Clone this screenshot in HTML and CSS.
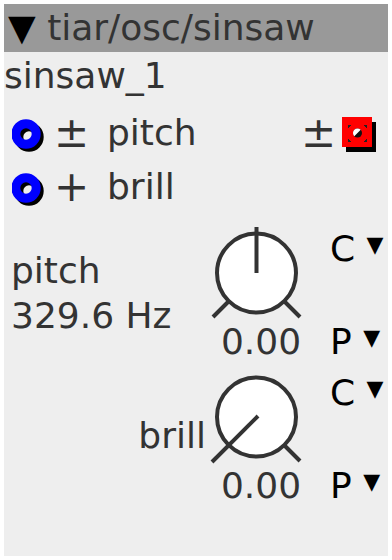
FILE: index.html
```html
<!DOCTYPE html>
<html>
<head>
<meta charset="utf-8">
<link rel="stylesheet" href="styles.css">
</head>
<body>
<div class="panel">
  <div class="header"><span class="tri">▼</span> tiar/osc/sinsaw</div>
  <div class="name">sinsaw_1</div>
  <div class="ports">
    <div class="port">
      <svg class="ring" width="36" height="36" viewBox="0 0 36 36">
        <circle cx="17" cy="19" r="10.2" fill="none" stroke="#000" stroke-width="9"/>
        <circle cx="14" cy="16" r="10.2" fill="none" stroke="#0000ff" stroke-width="9"/>
      </svg>
      <span class="sign">±</span>
      <span class="pname">pitch</span>
      <span class="spacer"></span>
      <span class="sign sign-out">±</span>
      <svg class="out" width="40" height="40" viewBox="0 0 40 40">
        <rect x="8" y="9" width="30" height="30" fill="#000"/>
        <rect x="4" y="4" width="30" height="30" fill="#ff0000"/>
        <g fill="#222">
          <rect x="10" y="12" width="2" height="2"/><rect x="12" y="12" width="1" height="1"/><rect x="10" y="14" width="1" height="1"/>
          <rect x="27" y="12" width="2" height="2"/><rect x="26" y="12" width="1" height="1"/><rect x="28" y="14" width="1" height="1"/>
          <rect x="10" y="27" width="2" height="2"/><rect x="12" y="28" width="1" height="1"/><rect x="10" y="26" width="1" height="1"/>
          <rect x="27" y="27" width="2" height="2"/><rect x="26" y="28" width="1" height="1"/><rect x="28" y="26" width="1" height="1"/>
        </g>
        <circle cx="19.5" cy="20" r="4.5" fill="#111"/>
        <path d="M16.3 23.2 A4.5 4.5 0 0 1 22.7 16.8 Z" fill="#fff"/>
      </svg>
    </div>
    <div class="port">
      <svg class="ring" width="36" height="36" viewBox="0 0 36 36">
        <circle cx="17" cy="19" r="10.2" fill="none" stroke="#000" stroke-width="9"/>
        <circle cx="14" cy="16" r="10.2" fill="none" stroke="#0000ff" stroke-width="9"/>
      </svg>
      <span class="sign">+</span>
      <span class="pname">brill</span>
    </div>
  </div>
  <div class="knobrow">
    <div class="label label-left">pitch<br>329.6 Hz</div>
    <div class="knob">
      <svg width="110" height="100" viewBox="0 0 110 100">
        <g stroke="#333" stroke-width="4" fill="none">
          <line x1="22" y1="78" x2="7" y2="93"/>
          <line x1="79" y1="78" x2="94" y2="93"/>
          <circle cx="50.5" cy="49" r="39.5" fill="#fff"/>
          <line x1="50.5" y1="49" x2="50.5" y2="3"/>
        </g>
      </svg>
      <div class="value">0.00</div>
    </div>
    <div class="modes">
      <div class="mode">C <span class="mtri">▼</span></div>
      <div class="mode">P <span class="mtri">▼</span></div>
    </div>
  </div>
  <div class="knobrow">
    <div class="label label-right">brill</div>
    <div class="knob">
      <svg width="110" height="100" viewBox="0 0 110 100">
        <g stroke="#333" stroke-width="4" fill="none">
          <line x1="79" y1="78" x2="94" y2="93"/>
          <circle cx="50.5" cy="49" r="39.5" fill="#fff"/>
          <line x1="52" y1="48" x2="6" y2="94"/>
        </g>
      </svg>
      <div class="value">0.00</div>
    </div>
    <div class="modes">
      <div class="mode">C <span class="mtri">▼</span></div>
      <div class="mode">P <span class="mtri">▼</span></div>
    </div>
  </div>
</div>
</body>
</html>
```
FILE: styles.css
```css
html, body {
  margin: 0;
  padding: 0;
  background: #ffffff;
}
body {
  padding: 4px;
  font-family: "DejaVu Sans", sans-serif;
  font-size: 36px;
  color: #333333;
}
.panel {
  width: 384px;
  height: 552px;
  background: #eeeeee;
  display: flex;
  flex-direction: column;
}
.header {
  height: 48px;
  line-height: 48px;
  background: #999999;
  padding-left: 4px;
  white-space: nowrap;
  overflow: hidden;
}
.tri {
  color: #000;
}
.name {
  height: 48px;
  line-height: 48px;
  padding-left: 0;
}
.ports {
  margin-top: 6px;
  padding-bottom: 2px;
}
.port {
  height: 54px;
  line-height: 54px;
  display: flex;
  align-items: center;
  padding-left: 8px;
  padding-right: 10px;
}
.ring {
  flex: none;
  margin-top: 6px;
}
.sign {
  margin-left: 6px;
  width: 30px;
  flex: none;
  font-size: 42px;
  white-space: nowrap;
}
.sign-out {
  width: 35px;
  margin-left: 0;
}
.pname {
  margin-left: 23px;
}
.spacer {
  flex: 1;
}
.out {
  flex: none;
  margin-left: 2px;
}
.knobrow {
  height: 144px;
  display: grid;
  grid-template-columns: 202px 110px 1fr;
  padding-top: 8px;
  box-sizing: border-box;
}
.label {
  line-height: 45px;
  white-space: nowrap;
}
.label-left {
  padding-left: 7px;
  padding-top: 24px;
}
.label-right {
  text-align: right;
  padding-top: 45px;
  padding-right: 0;
}
.knob svg {
  display: block;
}
.value {
  line-height: 36px;
  text-align: center;
}
.modes {
  display: flex;
  flex-direction: column;
  justify-content: space-between;
  padding-left: 14px;
  padding-top: 3px;
  color: #000;
}
.mode {
  line-height: 36px;
  white-space: nowrap;
}
.mtri {
  font-size: 22px;
  vertical-align: 9px;
}
```
